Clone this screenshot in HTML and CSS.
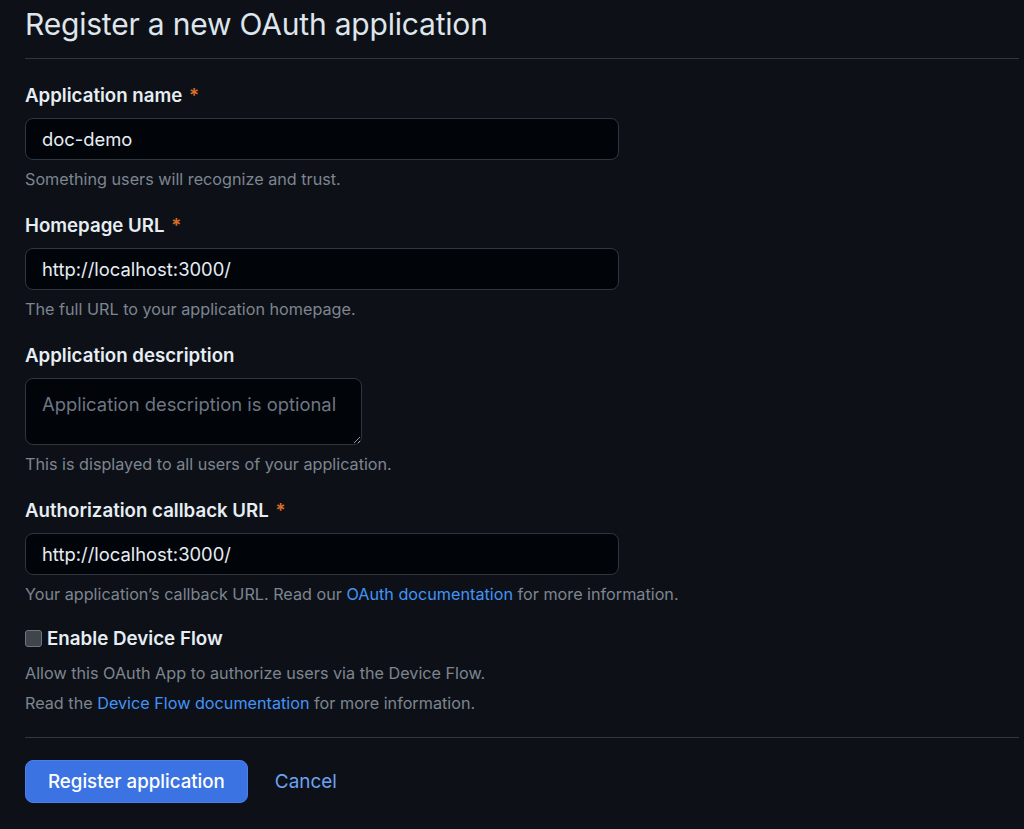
FILE: index.html
```html
<!DOCTYPE html>
<html lang="en">
<head>
<meta charset="utf-8">
<title>Register a new OAuth application</title>
<link rel="stylesheet" href="styles.css">
</head>
<body>
<main class="page">
  <h2 class="title">Register a new OAuth application</h2>
  <form class="form">
    <div class="group">
      <label class="label" for="name">Application name <span class="req">*</span></label>
      <input class="input" id="name" type="text" value="doc-demo">
      <p class="note">Something users will recognize and trust.</p>
    </div>
    <div class="group">
      <label class="label" for="home">Homepage URL <span class="req">*</span></label>
      <input class="input" id="home" type="text" value="http://localhost:3000/">
      <p class="note">The full URL to your application homepage.</p>
    </div>
    <div class="group">
      <label class="label" for="desc">Application description</label>
      <textarea class="textarea" id="desc" placeholder="Application description is optional"></textarea>
      <p class="note">This is displayed to all users of your application.</p>
    </div>
    <div class="group group-last">
      <label class="label" for="cb">Authorization callback URL <span class="req">*</span></label>
      <input class="input" id="cb" type="text" value="http://localhost:3000/">
      <p class="note">Your application’s callback URL. Read our <a class="link" href="#">OAuth documentation</a> for more information.</p>
    </div>
    <div class="device">
      <label class="check-row"><span class="checkbox"></span><span class="check-label">Enable Device Flow</span></label>
      <p class="note note-first">Allow this OAuth App to authorize users via the Device Flow.</p>
      <p class="note note-tight">Read the <a class="link" href="#">Device Flow documentation</a> for more information.</p>
    </div>
    <div class="actions">
      <button class="btn-primary" type="button">Register application</button>
      <a class="cancel" href="#">Cancel</a>
    </div>
  </form>
</main>
</body>
</html>
```

FILE: styles.css
```css
html, body {
  margin: 0;
  padding: 0;
  background: #0d1117;
  color-scheme: dark;
}
body {
  font-family: Inter, "Noto Sans", "Liberation Sans", sans-serif;
  color: #e6edf3;
}
.page {
  margin-left: 25px;
  width: 994px;
}
.title {
  margin: 0;
  padding-top: 4px;
  height: 59px;
  box-sizing: border-box;
  font-size: 30px;
  line-height: 40px;
  font-weight: 400;
  color: #dfe5ec;
  border-bottom: 1px solid #30363d;
  letter-spacing: -0.2px;
}
.form {
  display: flex;
  flex-direction: column;
  padding-top: 23px;
}
.group {
  display: flex;
  flex-direction: column;
  align-items: flex-start;
  margin-bottom: 21px;
}
.group-last {
  margin-bottom: 18px;
}
.label {
  font-size: 18.67px;
  line-height: 28px;
  font-weight: 600;
  color: #e6edf3;
  margin-bottom: 8px;
}
.req {
  color: #db6d28;
  margin-left: 2px;
}
.input, .textarea {
  box-sizing: border-box;
  width: 594px;
  height: 42px;
  padding: 0 16px;
  background: #010409;
  border: 1px solid #30363d;
  border-radius: 8px;
  color: #e6edf3;
  font-family: inherit;
  font-size: 18.4px;
  outline: none;
}
.textarea {
  width: 337px;
  height: 67px;
  padding: 12px 16px;
  line-height: 26px;
  resize: vertical;
}
.textarea::placeholder {
  color: #6e7681;
}
.note {
  margin: 7px 0 0;
  font-size: 16.2px;
  line-height: 24px;
  color: #7d8590;
}
.link {
  color: #4493f8;
  text-decoration: none;
}
.device {
  display: flex;
  flex-direction: column;
  padding-bottom: 22px;
  border-bottom: 1px solid #30363d;
}
.check-row {
  display: flex;
  align-items: center;
  gap: 5px;
  height: 28px;
}
.checkbox {
  width: 15px;
  height: 15px;
  border: 1px solid #6e7681;
  border-radius: 3px;
  background: #40444b;
}
.check-label {
  font-size: 18.75px;
  font-weight: 600;
  color: #e6edf3;
}
.note-first {
  margin-top: 9px;
}
.note-tight {
  margin-top: 6px;
}
.actions {
  display: flex;
  align-items: center;
  gap: 27px;
  padding-top: 22px;
}
.btn-primary {
  height: 43px;
  padding: 0 22px;
  background: #3b73e3;
  border: 1px solid #4a80ea;
  border-radius: 8px;
  color: #ffffff;
  font-family: inherit;
  font-size: 18.7px;
  font-weight: 500;
}
.cancel {
  color: #6ea3f4;
  font-size: 18.9px;
  text-decoration: none;
}
```
